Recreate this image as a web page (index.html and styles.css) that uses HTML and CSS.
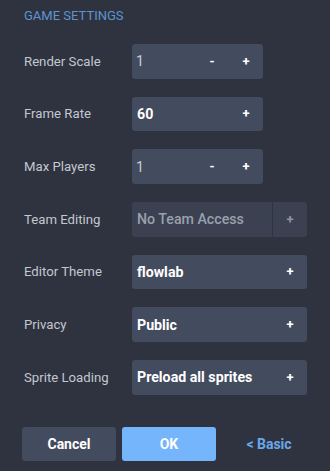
FILE: index.html
```html
<!DOCTYPE html>
<html>
<head>
<meta charset="utf-8">
<link rel="stylesheet" href="styles.css">
</head>
<body>
<div class="panel">
  <div class="title">GAME SETTINGS</div>
  <div class="rows">
    <div class="row">
      <div class="label">Render Scale</div>
      <div class="box narrow">
        <span class="value input">1</span>
        <span class="btn">-</span>
        <span class="btn">+</span>
      </div>
    </div>
    <div class="row">
      <div class="label">Frame Rate</div>
      <div class="box narrow">
        <span class="value">60</span>
        <span class="btn">+</span>
      </div>
    </div>
    <div class="row">
      <div class="label">Max Players</div>
      <div class="box narrow">
        <span class="value input">1</span>
        <span class="btn">-</span>
        <span class="btn">+</span>
      </div>
    </div>
    <div class="row">
      <div class="label">Team Editing</div>
      <div class="box wide disabled">
        <span class="value">No Team Access</span>
        <span class="btn divided">+</span>
      </div>
    </div>
    <div class="row">
      <div class="label">Editor Theme</div>
      <div class="box wide">
        <span class="value">flowlab</span>
        <span class="btn">+</span>
      </div>
    </div>
    <div class="row">
      <div class="label">Privacy</div>
      <div class="box wide">
        <span class="value">Public</span>
        <span class="btn">+</span>
      </div>
    </div>
    <div class="row">
      <div class="label">Sprite Loading</div>
      <div class="box wide">
        <span class="value">Preload all sprites</span>
        <span class="btn">+</span>
      </div>
    </div>
  </div>
  <div class="actions">
    <button class="action cancel">Cancel</button>
    <button class="action ok">OK</button>
    <button class="action link">&lt; Basic</button>
  </div>
</div>
</body>
</html>
```

FILE: styles.css
```css
html, body {
  margin: 0;
  padding: 0;
  background: #2e333f;
  width: 330px;
  height: 471px;
  overflow: hidden;
}
.panel {
  font-family: Roboto, "Liberation Sans", sans-serif;
  padding: 8px 0 0 24px;
}
.title {
  font-size: 13px;
  line-height: 16px;
  color: #5e93d0;
}
.rows {
  margin-top: 20px;
  display: flex;
  flex-direction: column;
  gap: 18px;
}
.row {
  display: flex;
  align-items: center;
  height: 34.67px;
}
.label {
  width: 108px;
  font-size: 13.2px;
  color: #c3c7cf;
}
.box {
  height: 100%;
  background: #434b5e;
  border-radius: 3px;
  display: flex;
  align-items: center;
}
.box.narrow { width: 131px; }
.box.wide { width: 175px; }
.box.disabled { background: #3b4151; }
.value {
  flex: 1;
  padding-left: 5px;
  font-size: 14.2px;
  font-weight: 700;
  color: #ffffff;
  white-space: nowrap;
}
.value.input {
  font-weight: 400;
  color: #c9cdd6;
  padding-left: 4px;
}
.disabled .value {
  color: #9aa0ac;
  font-weight: 500;
}
.btn {
  width: 34px;
  height: 100%;
  display: flex;
  align-items: center;
  justify-content: center;
  font-size: 13px;
  font-weight: 700;
  color: #ffffff;
}
.btn.divided {
  border-left: 1px solid #2f3441;
  color: #8d93a0;
}
.actions {
  margin-top: 32px;
  margin-left: -2px;
  display: flex;
  gap: 6px;
}
.action {
  width: 94px;
  height: 34px;
  border: none;
  border-radius: 3px;
  font-family: Roboto, "Liberation Sans", sans-serif;
  font-size: 14px;
  font-weight: 700;
  color: #ffffff;
  padding: 0;
}
.cancel { background: #434b5e; }
.ok { background: #75b5fc; }
.link { background: transparent; color: #6ba7ea; }
```
